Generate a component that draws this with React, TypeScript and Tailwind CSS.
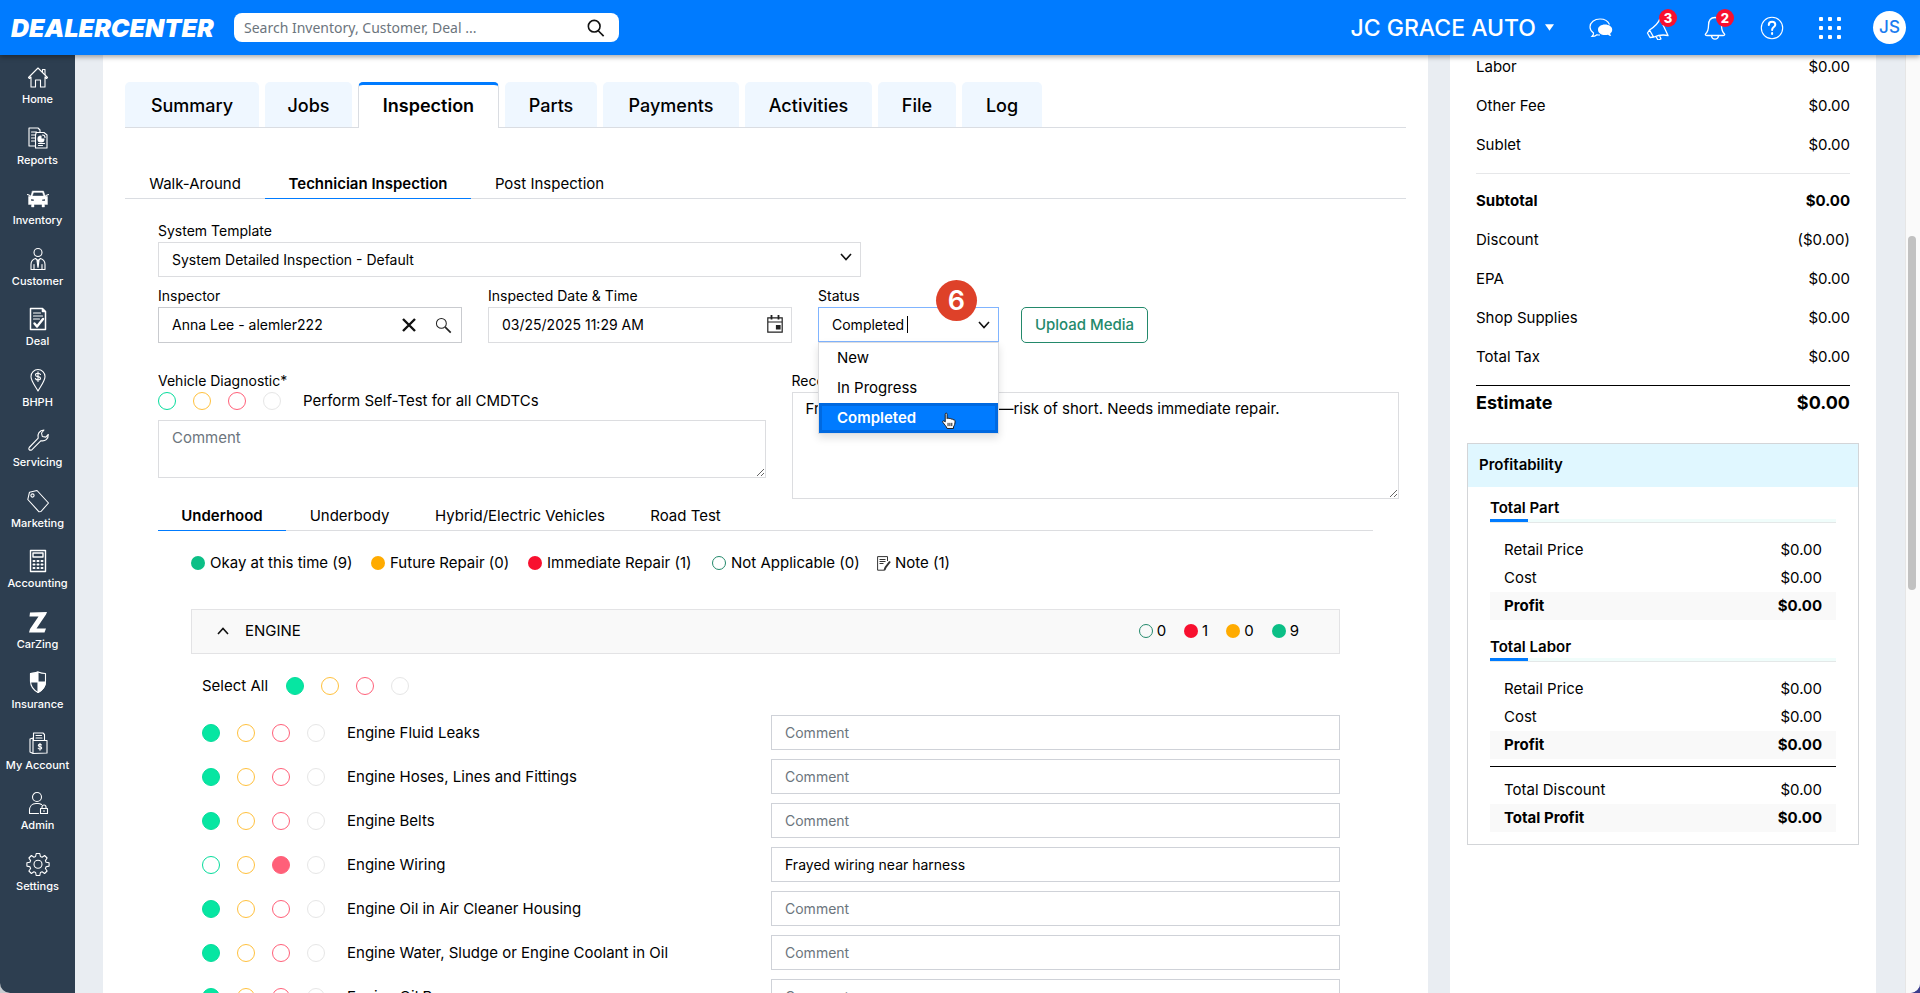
import { ReactNode } from 'react';

const stroke = {
  fill: 'none',
  stroke: 'currentColor',
  strokeWidth: 1.1,
  strokeLinecap: 'round' as const,
  strokeLinejoin: 'round' as const,
};

function Icon({ children, className }: { children: ReactNode; className?: string }) {
  return (
    <svg viewBox="0 0 24 24" aria-hidden="true" className={className ?? 'size-6'} {...stroke}>
      {children}
    </svg>
  );
}

const NAV: { label: string; icon: ReactNode }[] = [
  {
    label: 'Home',
    icon: (
      <>
        <path d="M2.5 12.5 12 3l9.5 9.5-1 1L19 12v10h-4.500v-7h-5v7H5V12l-1.500 1.500z" />
        <path d="M16.500 7V4.500H19v5" />
      </>
    ),
  },
  {
    label: 'Reports',
    icon: (
      <>
        <path d="M9.500 20H3V2h9l2 2v2" />
        <path d="M5.500 6h5M5.500 9H9M5.500 12H9M5.500 15H9M10 8V6.500h8L21 9v13H9.500V8" />
        <path d="M12.500 17.500h6M12.500 19.500h4" />
        <path d="M15 10a3 3 0 1 0 3 3h-3z" fill="currentColor" />
        <path d="M16.500 9a2.500 2.500 0 0 1 2.500 2.500" />
      </>
    ),
  },
  {
    label: 'Inventory',
    icon: (
      <>
        <path
          fillRule="evenodd"
          d="M6.500 5h11l1.800 5 2.200.5v8H18.500V21h-2.500v-2.500H8V21H5.500v-2.500H2.500v-8l2.200-.5zM7.500 6.500 6.300 10h11.400L16.500 6.500zM5 13v2h3v-1.500zM19 13l-3 .5V15h3z"
          fill="currentColor"
          strokeWidth="0.4"
        />
        <path d="M1.500 8.500 4 9.500M22.500 8.500 20 9.500" />
      </>
    ),
  },
  {
    label: 'Customer',
    icon: (
      <>
        <circle cx="12" cy="5.500" r="4" />
        <path d="M5 22.500v-5c0-3 1.500-5 4.500-6l2.500 2 2.500-2c3 1 4.500 3 4.500 6v5zM8 17.500v5M16 17.500v5" />
        <path d="m11 13.500 1 7 1-7z" fill="currentColor" />
      </>
    ),
  },
  {
    label: 'Deal',
    icon: (
      <>
        <path d="M4.500 1.500h12l3 3v18h-15zM16.500 1.500v3h3" strokeWidth="1.5" />
        <path d="M7.500 6h7M7.500 9h9M7.500 12h6" />
        <path d="m8.500 16.500 2.500 3 6-7.500" strokeWidth="2.4" />
      </>
    ),
  },
  {
    label: 'BHPH',
    icon: (
      <>
        <path d="M12 23C9 17.500 5 13 5 8.500a7 7 0 0 1 14 0C19 13 15 17.500 12 23z" />
        <path d="M14.500 6.500c-.5-1-1.300-1.300-2.500-1.300-1.500 0-2.500.6-2.500 1.700 0 2.400 5 1 5 3.400 0 1.100-1 1.700-2.500 1.700-1.300 0-2.200-.4-2.600-1.500M12 3.800v9.600" />
      </>
    ),
  },
  {
    label: 'Servicing',
    icon: <path d="m3.200 19.500 9-9.300C11 6 13.500 2.200 18 2l-2.500 3 .8 3.500 3.500.6 2.500-2.600c.2 4.500-3.300 7.200-7.300 6.200l-9 9c-2.300 1.200-4-.2-2.800-2.200z" />,
  },
  {
    label: 'Marketing',
    icon: (
      <>
        <path d="M3.500 3.200 11 1.500 22.500 14l-7.500 8.500-2 .3L1.800 10.500z" />
        <circle cx="6.500" cy="6.500" r="1.600" />
      </>
    ),
  },
  {
    label: 'Accounting',
    icon: (
      <>
        <path d="M4.500 1.500h15v21h-15zM7 4h10v4H7z" strokeWidth="1.400" />
        <path d="M7.500 12h1M11.500 12h1M15.500 12h1M7.500 15.500h1M11.500 15.500h1M15.500 15.500h1M7.500 19h1M11.500 19h1M15.500 19h1" strokeWidth="2" />
      </>
    ),
  },
  {
    label: 'CarZing',
    icon: <path d="M4 2.500 21 2 20 4.500 10.500 18.500H20l-1.500 4H3L4 19l8.500-12.500H3.500z" fill="currentColor" stroke="none" />,
  },
  {
    label: 'Insurance',
    icon: (
      <>
        <path d="M4.500 3.500C8 3.500 9.500 3 12 2c2.500 1 4 1.500 7.500 1.500V11c0 5-3 9-7.500 11.500C7.500 20 4.500 16 4.500 11z" />
        <path d="M12 2v10H4.500V3.500C8 3.500 9.500 3 12 2zM12 12h7.500c0 4.500-3 8-7.500 10.500z" fill="currentColor" />
      </>
    ),
  },
  {
    label: 'My Account',
    icon: (
      <>
        <path d="M4 8 7 7v14.500M7 9.500h14V22L7 22.500 4 21V8M7.500 9V2H17l1.500 1.500V9M10 4.500h5.500M10 7h6" />
        <path d="M15.500 14c-.8-1.200-3.200-1-3.200.4 0 1.600 3.400.9 3.400 2.500 0 1.400-2.700 1.600-3.500.3M14 12.200v7" />
      </>
    ),
  },
  {
    label: 'Admin',
    icon: (
      <>
        <circle cx="11" cy="6" r="4.500" />
        <path d="M12.500 22.500H3.500v-3c0-4 2.500-7 6.500-7h2c1.300 0 2.500.4 3.500 1M14.500 17.500h7v5h-7zM16 17.500V16a2 2 0 0 1 4 0v1.500M18 19.500v1" />
      </>
    ),
  },
  {
    label: 'Settings',
    icon: (
      <>
        <path d="M10.200 1.500h3.600l.6 3 1.700.7 2.500-1.700 2.500 2.500-1.700 2.600.7 1.600 3 .6v3.300l-3 .7-.7 1.700 1.700 2.500-2.500 2.500-2.500-1.700-1.700.7-.6 3h-3.600l-.6-3-1.700-.7-2.500 1.700L2.900 19l1.700-2.500-.7-1.700-3-.7v-3.300l3-.6.7-1.600L2.900 6l2.500-2.500 2.500 1.700 1.700-.7z" />
        <circle cx="12" cy="12.300" r="4" />
      </>
    ),
  },
];

const TABS = [
  { label: 'Summary', width: 'w-[134px]' },
  { label: 'Jobs', width: 'w-[87px]' },
  { label: 'Inspection', width: 'w-[141px]', active: true },
  { label: 'Parts', width: 'w-[92px]' },
  { label: 'Payments', width: 'w-[136px]' },
  { label: 'Activities', width: 'w-[127px]' },
  { label: 'File', width: 'w-[78px]' },
  { label: 'Log', width: 'w-[80px]' },
];

const CHECKS = [
  { label: 'Engine Fluid Leaks' },
  { label: 'Engine Hoses, Lines and Fittings' },
  { label: 'Engine Belts' },
  { label: 'Engine Wiring', state: 'red', note: 'Frayed wiring near harness' },
  { label: 'Engine Oil in Air Cleaner Housing' },
  { label: 'Engine Water, Sludge or Engine Coolant in Oil' },
  { label: 'Engine Oil Pan' },
];

const RATINGS = [
  { key: 'green', title: 'Okay', style: 'border-[#06dc9c] checked:bg-[#06e6a2]' },
  { key: 'yellow', title: 'Future repair', style: 'border-[#ffc13d] checked:bg-[#ffc13d]' },
  { key: 'red', title: 'Immediate repair', style: 'border-[#ff6079] checked:bg-[#ff6079]' },
  { key: 'none', title: 'Not applicable', style: 'border-[#e6e6e6] checked:bg-[#e6e6e6]' },
];

function Rating({ name, value }: { name: string; value?: string }) {
  return (
    <div role="radiogroup" aria-label={name} className="flex items-center gap-[17px]">
      {RATINGS.map((r) => (
        <input
          key={r.key}
          type="radio"
          name={name}
          aria-label={r.title}
          defaultChecked={value === r.key}
          className={`size-[18px] appearance-none rounded-full border ${r.style}`}
        />
      ))}
    </div>
  );
}

function Chevron({ className }: { className: string }) {
  return (
    <svg viewBox="0 0 12 8" aria-hidden="true" className={className} fill="none" stroke="#111" strokeWidth="1.6">
      <path d="m1 1 5 5.500L11 1" />
    </svg>
  );
}

function Magnifier({ className }: { className: string }) {
  return (
    <svg viewBox="0 0 20 20" aria-hidden="true" className={className} fill="none" stroke="#111" strokeWidth="1.8">
      <circle cx="8" cy="8" r="6.500" />
      <path d="m12.500 13 6 6" />
    </svg>
  );
}

const badge =
  'absolute -top-[7px] right-[-7px] flex size-[18px] items-center justify-center rounded-full bg-[#f8102f] text-[13px]/[18px] font-extrabold';

function Header() {
  return (
    <header className="relative z-20 flex h-[55px] shrink-0 items-center bg-[#007bff] pl-[11px] pr-[14px] text-white shadow-[0_2px_5px_rgba(0,0,0,0.35)]">
      <a href="#home" className="w-[223px] whitespace-nowrap text-[25px]/[32px] font-black italic">
        DEALERCENTER
      </a>
      <form role="search" className="flex h-[29px] w-[385px] items-center rounded-[8px] bg-white pl-[10px] pr-[14px]">
        <input
          type="search"
          aria-label="Search"
          placeholder="Search Inventory, Customer, Deal ..."
          className="min-w-0 flex-1 font-['Noto_Sans',sans-serif] text-[14px]/[20px] text-black outline-none placeholder:text-[#6c757d]"
        />
        <button type="button" aria-label="Run search">
          <Magnifier className="size-[18px]" />
        </button>
      </form>
      <div className="ml-auto flex items-center">
        <button type="button" className="flex items-center gap-[9px] text-[23px]/[28px] font-medium">
          JC GRACE AUTO
          <svg viewBox="0 0 10 7" aria-hidden="true" className="h-[7px] w-[9px]" fill="currentColor">
            <path d="M0 0h10L5 7z" />
          </svg>
        </button>
        <button type="button" aria-label="Messages" className="ml-[35px]">
          <svg viewBox="0 0 24 20" aria-hidden="true" className="h-[20px] w-[24px]" fill="none" stroke="#fff" strokeWidth="1.200">
            <path d="M20.500 6.500C19 3 15.500 1 11 1 5.500 1 1 4.500 1 9c0 2.500 1.500 4.500 3.500 6 .2 1.200-.5 2.500-1.500 3.500 2 0 3.500-.5 5-1.800 1 .3 2 .3 3 .3" />
            <path d="M16 6.500c4 0 7.200 2.200 7.200 5.200 0 1.600-.8 2.900-2 3.900 0 1 .4 1.700 1 2.400-1.300 0-2.300-.4-3.200-1.200-.9.300-1.900.3-3 .3-4 0-7-2.300-7-5.400s3-5.200 7-5.200z" fill="#fff" stroke="none" />
          </svg>
        </button>
        <button type="button" aria-label="Announcements" className="relative ml-[33px]">
          <svg viewBox="0 0 24 24" aria-hidden="true" className="size-[24px]" {...stroke} strokeWidth="1.300">
            <path d="M14 2.500c-1.500 4.500-5 8-10.500 11.500L1.500 17l2.500 4.500 4-.5c4-1.800 9-2.500 14-1.500zM3.500 14l4 7M10 20.500l2 3.500 3-1-1.500-3.500" />
          </svg>
          <span className={badge}>3</span>
        </button>
        <button type="button" aria-label="Notifications" className="relative ml-[33px]">
          <svg viewBox="0 0 24 24" aria-hidden="true" className="size-[24px]" {...stroke} strokeWidth="1.300">
            <path d="M12 1.500c4.500 0 6.500 3.500 6.500 8 0 4 .7 6.500 3 8.500.6 1-.2 1.500-1.500 1.500H4c-1.300 0-2.100-.5-1.500-1.500 2.300-2 3-4.500 3-8.500 0-4.500 2-8 6.500-8zM8.500 20c.3 2 1.600 3.200 3.500 3.200s3.200-1.200 3.500-3.200" />
          </svg>
          <span className={badge}>2</span>
        </button>
        <button type="button" aria-label="Help" className="ml-[33px]">
          <svg viewBox="0 0 24 24" aria-hidden="true" className="size-[24px]" {...stroke}>
            <circle cx="12" cy="12" r="10.700" />
            <path d="M8.800 9c0-2 1.400-3.200 3.300-3.200s3.200 1.200 3.200 2.900c0 2.300-3.200 2.600-3.200 5.300M12.100 17v1" strokeWidth="2" />
          </svg>
        </button>
        <button type="button" aria-label="Apps" className="ml-[35px] grid grid-cols-3 gap-[5px]">
          {[0, 1, 2, 3, 4, 5, 6, 7, 8].map((i) => (
            <span key={i} className="size-1 rounded-[1px] bg-white" />
          ))}
        </button>
        <button type="button" className="ml-[32px] size-[33px] rounded-full bg-white text-[17px]/[33px] font-medium text-[#1a7cf0]">
          JS
        </button>
      </div>
    </header>
  );
}

function Sidebar() {
  return (
    <nav aria-label="Main" className="w-[75px] shrink-0 bg-[#2d3e50] pt-[10px] text-white">
      <ul className="flex h-[847px] flex-col">
        {NAV.map((item) => (
          <li key={item.label} className="flex-1">
            <a href={'#' + item.label} className="flex flex-col items-center gap-[2px]">
              <Icon className="size-[24px]">{item.icon}</Icon>
              <span className="whitespace-nowrap text-[11px]/[16px] font-medium">{item.label}</span>
            </a>
          </li>
        ))}
      </ul>
    </nav>
  );
}

const fieldBox = 'border border-[#dcdde0] bg-white';
const labelText = 'mb-px block text-[14px]/[20px]';

function StatusField() {
  return (
    <div className="relative w-[181px]">
      <label htmlFor="status" className={labelText}>Status</label>
      <div className="flex h-[35px] items-center border border-[#80b4ff] bg-white pl-[13px] pr-[8px]">
        <input id="status" role="combobox" aria-expanded="true" aria-controls="status-list" size={8} defaultValue="Completed" className="min-w-0 flex-1 text-[14px]/[20px] outline-none" />
        <Chevron className="h-[8px] w-[12px]" />
      </div>
      <span aria-hidden="true" className="absolute left-[89px] top-[30px] h-[17px] w-px bg-black" />
      <ul id="status-list" role="listbox" aria-label="Status" className="absolute left-0 top-full z-10 w-full border border-[#dcdde0] bg-white text-[15px]/[30px] shadow-[0_4px_8px_rgba(0,0,0,0.12)]">
        <li role="option" aria-selected="false" className="px-[18px]">New</li>
        <li role="option" aria-selected="false" className="px-[18px]">In Progress</li>
        <li role="option" aria-selected="true" className="bg-[#007bff] px-[18px] font-semibold text-white shadow-[inset_0_0_0_3px_#0069e0]">Completed</li>
      </ul>
      <span className="absolute -top-[6px] left-[118px] z-20 flex size-[41px] items-center justify-center rounded-full bg-[#de4129] text-[27px]/[41px] font-semibold text-white">6</span>
      <svg viewBox="0 0 16 18" aria-hidden="true" className="absolute left-[123px] top-[126px] z-20 h-[17px] w-[15px]" fill="#fff" stroke="#111" strokeWidth="1" strokeLinejoin="round">
        <path d="M4.500 10.500V2.300c0-1.600 2-1.600 2 0V7c.3-1 1.900-.9 2.100.3.500-1 1.900-.7 2.100.4.600-.8 2-.5 2.200.7.900-.5 2.100 0 2.100 1.200 0 3-.6 4.500-1.700 6.200V17.500H6.500c-.8-2.200-2.400-3.800-4.500-6.500-1-1.300.6-2.500 2.500-.5z" />
        <path d="M7.500 11.500v3.500M9.500 11.500v3.500M11.500 11.500v3.500" />
      </svg>
    </div>
  );
}

function Dot({ className }: { className: string }) {
  return <span aria-hidden="true" className={`size-[14px] shrink-0 rounded-full ${className}`} />;
}

function LegendItem({ dot, text, width }: { dot: string; text: string; width: string }) {
  return (
    <li className={`flex items-center gap-[5px] ${width}`}>
      <Dot className={dot} />
      {text}
    </li>
  );
}

function Inspection() {
  return (
    <div className="pl-[33px] pr-[7px] pt-[22px]">
      <div className="relative w-[703px]">
        <label htmlFor="template" className={labelText}>System Template</label>
        <select id="template" className={`${fieldBox} h-[35px] w-full appearance-none pl-[13px] text-[14px]/[20px]`}>
          <option>System Detailed Inspection - Default</option>
        </select>
        <Chevron className="pointer-events-none absolute right-[9px] top-[32px] h-[8px] w-[12px]" />
      </div>

      <div className="mt-[9px] flex items-end gap-[26px]">
        <div className="w-[304px]">
          <label htmlFor="inspector" className={labelText}>Inspector</label>
          <div className="flex h-[36px] items-center border border-[#c9cbcf] pl-[13px] pr-[9px]">
            <input id="inspector" defaultValue="Anna Lee - alemler222" className="min-w-0 flex-1 text-[14px]/[20px] outline-none" />
            <button type="button" aria-label="Clear inspector">
              <svg viewBox="0 0 14 14" aria-hidden="true" className="size-[14px]" stroke="#111" strokeWidth="2.400">
                <path d="m1 1 12 12M13 1 1 13" />
              </svg>
            </button>
            <button type="button" aria-label="Find inspector" className="ml-[19px]">
              <svg viewBox="0 0 20 20" aria-hidden="true" className="size-[17px]" fill="none" stroke="#222">
                <circle cx="7.500" cy="7.500" r="5.800" strokeWidth="1.200" />
                <path d="m12 12 6.500 6.500" strokeWidth="2" />
              </svg>
            </button>
          </div>
        </div>
        <div className="w-[304px]">
          <label htmlFor="inspected" className={labelText}>Inspected Date &amp; Time</label>
          <div className={`${fieldBox} flex h-[36px] items-center pl-[13px] pr-[8px]`}>
            <input id="inspected" defaultValue="03/25/2025 11:29 AM" className="min-w-0 flex-1 text-[14px]/[20px] outline-none" />
            <button type="button" aria-label="Pick a date" className="mb-[3px]">
              <svg viewBox="0 0 16 18" aria-hidden="true" className="h-[18px] w-[16px]" fill="none" stroke="#222" strokeWidth="1.200">
                <path d="M.8 2.800h14.400v14.400H.8zM.8 7h14.400" />
                <path d="M4.500 0v4.500M11.500 0v4.500" strokeWidth="1.800" />
                <path d="M9.500 10.500h3.500V14H9.500z" fill="#222" />
              </svg>
            </button>
          </div>
        </div>
        <div className="flex items-end gap-[22px] pb-px">
          <StatusField />
          <button type="button" className="-mb-px h-[36px] w-[127px] rounded-[5px] border border-[#23896b] text-[15px]/[20px] font-medium text-[#23896b]">
            Upload Media
          </button>
        </div>
      </div>

      <div className="mt-[28px] grid grid-cols-2 gap-[26px]">
        <div>
          <p className="text-[14px]/[20px]">Vehicle Diagnostic*</p>
          <div className="flex h-[20px] items-center gap-[22px]">
            <Rating name="Perform Self-Test for all CMDTCs" />
            <span className="text-[15px]/[20px]">Perform Self-Test for all CMDTCs</span>
          </div>
          <textarea aria-label="Diagnostic comment" placeholder="Comment" className={`${fieldBox} mt-[9px] block h-[58px] w-full px-[13px] py-[7px] text-[15px]/[20px] placeholder:text-[#6c757d]`} />
        </div>
        <div>
          <label htmlFor="recommendation" className={labelText}>Recommendation</label>
          <textarea
            id="recommendation"
            defaultValue="Frayed wiring near harness—risk of short. Needs immediate repair."
            className={`${fieldBox} block h-[107px] w-full px-[13px] py-[6px] text-[15px]/[20px]`}
          />
        </div>
      </div>

      <div className="mr-[26px]">
        <div role="tablist" aria-label="Inspection area" className="mt-[4px] flex h-[28px] border-b border-[#dcdde0] text-[15px]/[24px]">
          <button type="button" role="tab" aria-selected="true" className="-mb-px w-[128px] border-b border-[#007bff] pb-[2px] font-semibold">Underhood</button>
          <button type="button" role="tab" className="w-[127px] pb-[2px]">Underbody</button>
          <button type="button" role="tab" className="w-[214px] pb-[2px]">Hybrid/Electric Vehicles</button>
          <button type="button" role="tab" className="w-[117px] pb-[2px]">Road Test</button>
        </div>

        <div className="px-[33px]">
          <ul className="mt-[22px] flex text-[15px]/[20px]">
            <LegendItem dot="bg-[#0bbf86]" text="Okay at this time (9)" width="w-[180px]" />
            <LegendItem dot="bg-[#ffab00]" text="Future Repair (0)" width="w-[157px]" />
            <LegendItem dot="bg-[#f8102f]" text="Immediate Repair (1)" width="w-[184px]" />
            <LegendItem dot="border border-[#23896b]" text="Not Applicable (0)" width="w-[165px]" />
            <li className="flex items-center gap-[4px]">
              <svg viewBox="0 0 14 15" aria-hidden="true" className="h-[15px] w-[14px]" fill="none" stroke="#333" strokeWidth="1">
                <path d="M10.500 5V.6H.6v13.600h7.200M2.500 3.500h6M2.500 5.500h6M2.500 7.500h4" />
                <path d="m13 5.500-4.500 6-1 2.500" strokeWidth="2" />
              </svg>
              Note (1)
            </li>
          </ul>

          <div className="mt-[36px] flex h-[45px] items-center border border-[#e3e3e5] bg-[#f9f9f9] pb-px pl-[25px] pr-[40px] text-[15px]/[20px]">
            <button type="button" aria-expanded="true" className="flex items-center gap-[16px]">
              <Chevron className="h-[8px] w-[12px] rotate-180" />
              ENGINE
            </button>
            <ul className="ml-auto flex gap-[18px]">
              <li className="flex items-center gap-[4px]"><Dot className="border border-[#23896b]" />0</li>
              <li className="flex items-center gap-[4px]"><Dot className="bg-[#f8102f]" />1</li>
              <li className="flex items-center gap-[4px]"><Dot className="bg-[#ffab00]" />0</li>
              <li className="flex items-center gap-[4px]"><Dot className="bg-[#0bbf86]" />9</li>
            </ul>
          </div>

          <div className="mt-[22px] flex items-center pl-[11px] text-[15px]/[20px]">
            <span className="w-[84px]">Select All</span>
            <Rating name="Select All" value="green" />
          </div>

          <ul className="mt-[19px] flex flex-col gap-[9px] pl-[11px] text-[15px]/[20px]">
            {CHECKS.map((c) => (
              <li key={c.label} className="grid grid-cols-2">
                <div className="flex items-center gap-[22px]">
                  <Rating name={c.label} value={c.state ?? 'green'} />
                  <span>{c.label}</span>
                </div>
                <input
                  aria-label={c.label + ' comment'}
                  placeholder="Comment"
                  defaultValue={c.note}
                  className="h-[35px] border border-[#cfd2d8] px-[13px] text-[14px]/[20px] placeholder:text-[#6c757d]"
                />
              </li>
            ))}
          </ul>
        </div>
      </div>
    </div>
  );
}

function Line({ label, value = '$0.00' }: { label: string; value?: string }) {
  return (
    <div className="flex justify-between">
      <dt>{label}</dt>
      <dd>{value}</dd>
    </div>
  );
}

function ProfitRow({ label, strong }: { label: string; strong?: boolean }) {
  return (
    <div className={`flex h-[28px] items-center justify-between px-[14px] ${strong ? 'bg-[#f9f9f9] pb-px font-bold' : ''}`}>
      <dt>{label}</dt>
      <dd>$0.00</dd>
    </div>
  );
}

function ProfitSection({ title }: { title: string }) {
  return (
    <section>
      <h3 className="font-semibold">{title}</h3>
      <div className="mt-px h-1 border-b border-[#e4e8e8] bg-[#f0fdfb]">
        <div className="h-[3px] w-[38px] bg-[#007bff]" />
      </div>
      <dl className="mt-[13px]">
        <ProfitRow label="Retail Price" />
        <ProfitRow label="Cost" />
        <ProfitRow label="Profit" strong />
      </dl>
    </section>
  );
}

function Totals() {
  return (
    <aside className="w-[426px] shrink-0 bg-white px-[17px] text-[15px]/[20px]">
      <div className="px-[9px]">
        <dl className="flex flex-col gap-[19px] border-b border-[#e6e7e9] pb-[18px] pt-[2px]">
          <Line label="Labor" />
          <Line label="Other Fee" />
          <Line label="Sublet" />
        </dl>
        <dl className="flex flex-col gap-[19px] border-b border-black pb-[18px] pt-[17px]">
          <div className="flex justify-between font-bold">
            <dt>Subtotal</dt>
            <dd>$0.00</dd>
          </div>
          <Line label="Discount" value="($0.00)" />
          <Line label="EPA" />
          <Line label="Shop Supplies" />
          <Line label="Total Tax" />
        </dl>
        <dl className="flex justify-between pt-[5px] text-[18px]/[24px] font-bold">
          <dt>Estimate</dt>
          <dd>$0.00</dd>
        </dl>
      </div>

      <section className="mt-[28px] border border-[#d3d5d8]">
        <h2 className="bg-[#e0f7ff] pb-[12px] pl-[11px] pt-[11px] font-semibold">Profitability</h2>
        <div className="flex flex-col px-[22px] pb-[12px] pt-[11px]">
          <ProfitSection title="Total Part" />
          <div className="mt-[17px]">
            <ProfitSection title="Total Labor" />
          </div>
          <dl className="mt-[7px] border-t border-black pt-[9px]">
            <ProfitRow label="Total Discount" />
            <ProfitRow label="Total Profit" strong />
          </dl>
        </div>
      </section>
    </aside>
  );
}

export default function App() {
  return (
    <div className="h-screen bg-linear-to-r from-[#c9ccd0] to-[#3c3c8c] font-[Inter,sans-serif] text-black">
      <div className="flex h-full flex-col overflow-hidden rounded-b-[10px] bg-[#e9edf2]">
        <Header />
        <div className="flex min-h-0 flex-1">
          <Sidebar />
          <div className="flex min-w-0 flex-1 gap-[22px] overflow-hidden pl-[28px] pr-[29px]">
            <main className="min-w-0 flex-1 bg-white px-[22px] pt-[27px]">
              <div role="tablist" aria-label="Repair order" className="flex h-[46px] gap-[6px] border-b border-[#dadde2] text-[18px]/[24px]">
                {TABS.map((t) => (
                  <button
                    key={t.label}
                    type="button"
                    role="tab"
                    aria-selected={!!t.active}
                    className={`${t.width} rounded-t-[5px] ${
                      t.active
                        ? '-mb-px border-x border-t-[3px] border-x-[#dadde2] border-t-[#007bff] bg-white pb-px font-semibold'
                        : 'bg-[#eff7ff] pt-[2px] font-medium'
                    }`}
                  >
                    {t.label}
                  </button>
                ))}
              </div>
              <div role="tablist" aria-label="Inspection type" className="mt-[43px] flex h-[28px] border-b border-[#dadde2] text-[15px]/[24px]">
                <button type="button" role="tab" className="w-[140px] pb-[2px]">Walk-Around</button>
                <button type="button" role="tab" aria-selected="true" className="-mb-px w-[206px] border-b border-[#007bff] pb-[2px] font-semibold">Technician Inspection</button>
                <button type="button" role="tab" className="w-[157px] pb-[2px]">Post Inspection</button>
              </div>
              <Inspection />
            </main>
            <Totals />
          </div>
          <div aria-hidden="true" className="w-[15px] shrink-0 border-l border-[#e6e6e6] bg-[#fafafa] pl-[2px] pt-[181px]">
            <div className="h-[354px] w-[8px] rounded-full bg-[#c1c1c1]" />
          </div>
        </div>
      </div>
    </div>
  );
}
